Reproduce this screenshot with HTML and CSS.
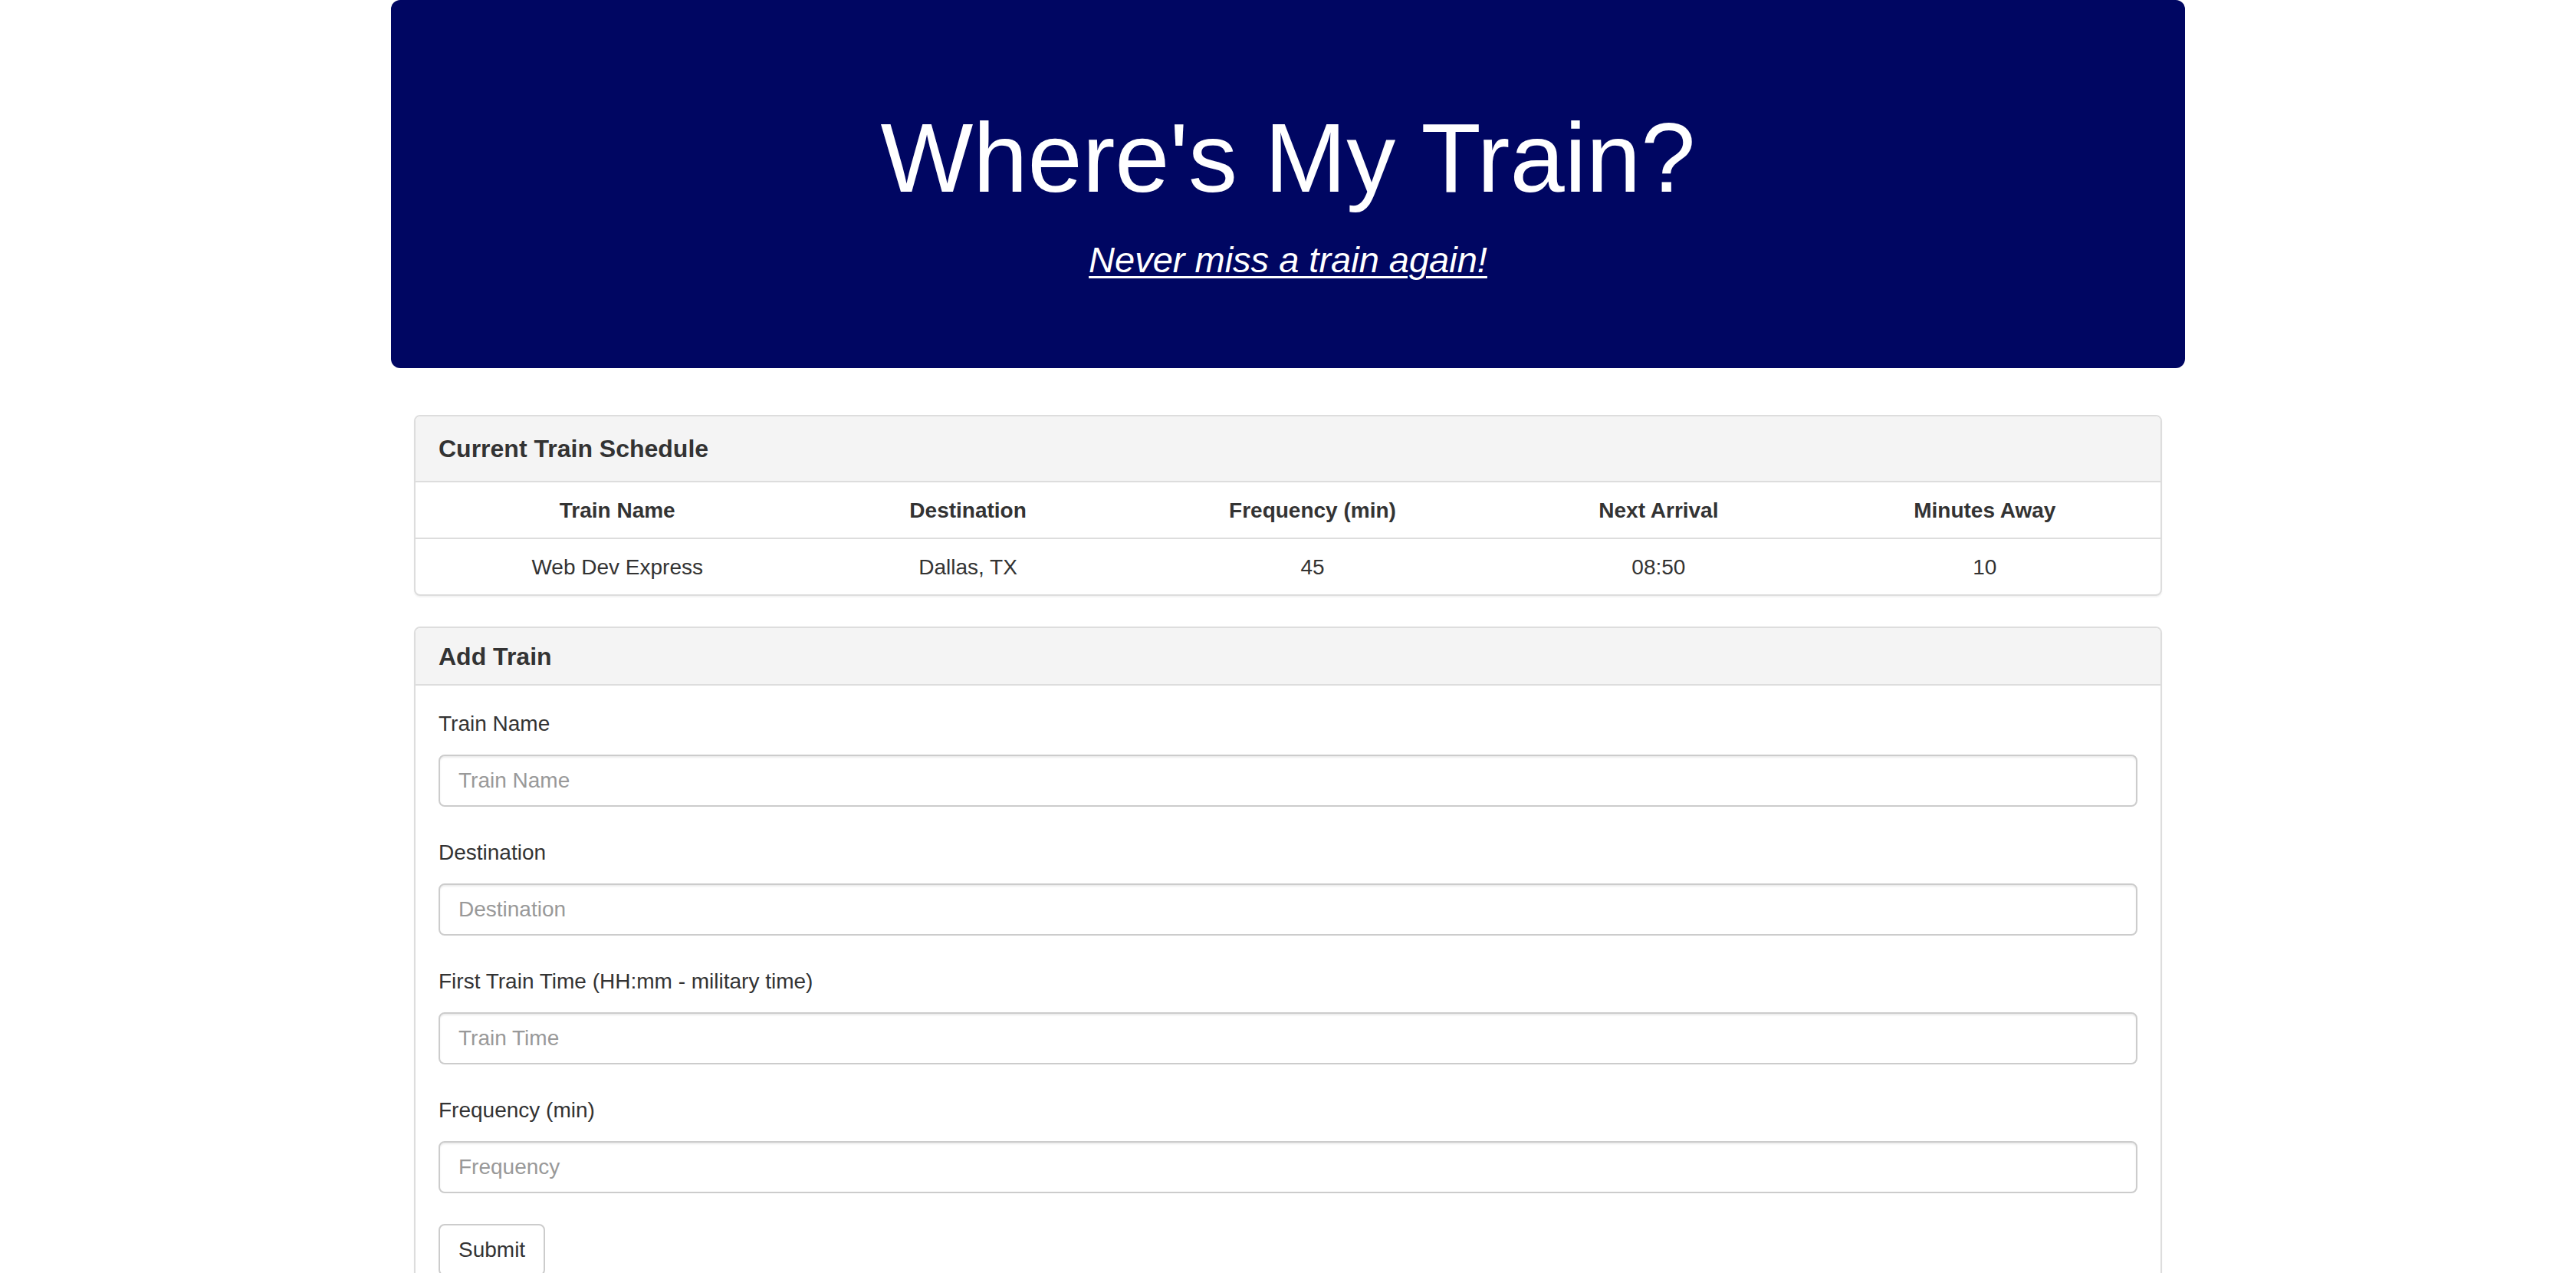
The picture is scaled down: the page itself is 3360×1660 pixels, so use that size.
FILE: index.html
```html
<!DOCTYPE html>
<html lang="en">
<head>
<meta charset="utf-8">
<title>Where's My Train?</title>
<link rel="stylesheet" href="styles.css">
</head>
<body>
<div class="container">
  <header class="jumbotron">
    <h1 class="jumbo-title">Where's My Train?</h1>
    <h3 class="jumbo-sub"><u><em>Never miss a train again!</em></u></h3>
  </header>
  <main class="content">
    <section class="panel">
      <div class="panel-heading heading-tall">
        <h3 class="panel-title">Current Train Schedule</h3>
      </div>
      <table class="schedule">
        <colgroup>
          <col class="c1"><col class="c2"><col class="c3"><col class="c4"><col class="c5">
        </colgroup>
        <thead>
          <tr>
            <th>Train Name</th>
            <th>Destination</th>
            <th>Frequency (min)</th>
            <th>Next Arrival</th>
            <th>Minutes Away</th>
          </tr>
        </thead>
        <tbody>
          <tr>
            <td>Web Dev Express</td>
            <td>Dallas, TX</td>
            <td>45</td>
            <td>08:50</td>
            <td>10</td>
          </tr>
        </tbody>
      </table>
    </section>
    <section class="panel">
      <div class="panel-heading">
        <h3 class="panel-title title-short">Add Train</h3>
      </div>
      <div class="panel-body">
        <form class="train-form">
          <div class="form-group">
            <label for="train-name">Train Name</label>
            <input id="train-name" class="form-control" type="text" placeholder="Train Name">
          </div>
          <div class="form-group">
            <label for="destination">Destination</label>
            <input id="destination" class="form-control" type="text" placeholder="Destination">
          </div>
          <div class="form-group">
            <label for="train-time">First Train Time (HH:mm - military time)</label>
            <input id="train-time" class="form-control" type="text" placeholder="Train Time">
          </div>
          <div class="form-group">
            <label for="frequency">Frequency (min)</label>
            <input id="frequency" class="form-control" type="text" placeholder="Frequency">
          </div>
          <button type="button" class="btn">Submit</button>
        </form>
      </div>
    </section>
  </main>
</div>
</body>
</html>
```
FILE: styles.css
```css
* {
  box-sizing: border-box;
}

html, body {
  margin: 0;
  padding: 0;
  background: #ffffff;
}

body {
  font-family: "Liberation Sans", Arial, Helvetica, sans-serif;
  font-size: 28px;
  line-height: 40px;
  color: #333333;
}

.container {
  width: 2340px;
  margin: 0 auto;
}

.jumbotron {
  background: #000662;
  color: #ffffff;
  border-radius: 12px;
  height: 480px;
  padding-top: 137px;
  text-align: center;
}

.jumbo-title {
  margin: 0;
  font-size: 128px;
  line-height: 138px;
  font-weight: 400;
}

.jumbo-sub {
  margin: 38px 0 0;
  font-size: 47px;
  line-height: 51px;
  font-weight: 400;
}

.jumbo-sub u {
  text-decoration-thickness: 3px;
  text-underline-offset: 5px;
}

.content {
  margin-top: 61px;
  padding: 0 30px;
}

.panel {
  border: 2px solid #dddddd;
  border-radius: 8px;
  margin-bottom: 40px;
  overflow: hidden;
  background: #ffffff;
  box-shadow: 0 2px 2px rgba(0, 0, 0, 0.05);
}

.panel-heading {
  background: #f4f4f4;
  border-bottom: 2px solid #dddddd;
  padding: 20px 30px 19px;
}

.panel-title {
  margin: 0;
  font-size: 32px;
  font-weight: 700;
  line-height: 34px;
  color: #333333;
}

.heading-tall {
  padding: 21px 30px 20px;
}

.heading-tall .panel-title {
  line-height: 43px;
}

.schedule {
  width: 100%;
  border-collapse: collapse;
  table-layout: fixed;
}

.c1 { width: 23.13%; }
.c2 { width: 17.06%; }
.c3 { width: 22.43%; }
.c4 { width: 17.24%; }
.c5 { width: 20.14%; }

.schedule th,
.schedule td {
  padding: 17px 16px 15px;
  line-height: 40px;
  text-align: center;
  font-size: 28px;
}

.schedule th {
  font-weight: 700;
  border-bottom: 2px solid #dddddd;
}

.panel-body {
  padding: 30px;
}

.form-group {
  margin-bottom: 40px;
}

.form-group label {
  display: block;
  font-size: 28px;
  line-height: 40px;
  margin-bottom: 20px;
  color: #333333;
}

.form-control {
  display: block;
  width: 100%;
  height: 68px;
  padding: 12px 24px;
  font-family: inherit;
  font-size: 28px;
  line-height: 40px;
  color: #555555;
  background: #ffffff;
  border: 2px solid #cccccc;
  border-radius: 8px;
  box-shadow: inset 0 2px 2px rgba(0, 0, 0, 0.075);
  outline: none;
}

.form-control::placeholder {
  color: #999999;
  opacity: 1;
}

.btn {
  display: inline-block;
  font-family: inherit;
  font-size: 28px;
  line-height: 40px;
  padding: 12px 24px;
  color: #333333;
  background: #ffffff;
  border: 2px solid #cccccc;
  border-radius: 8px;
  cursor: pointer;
}
```
